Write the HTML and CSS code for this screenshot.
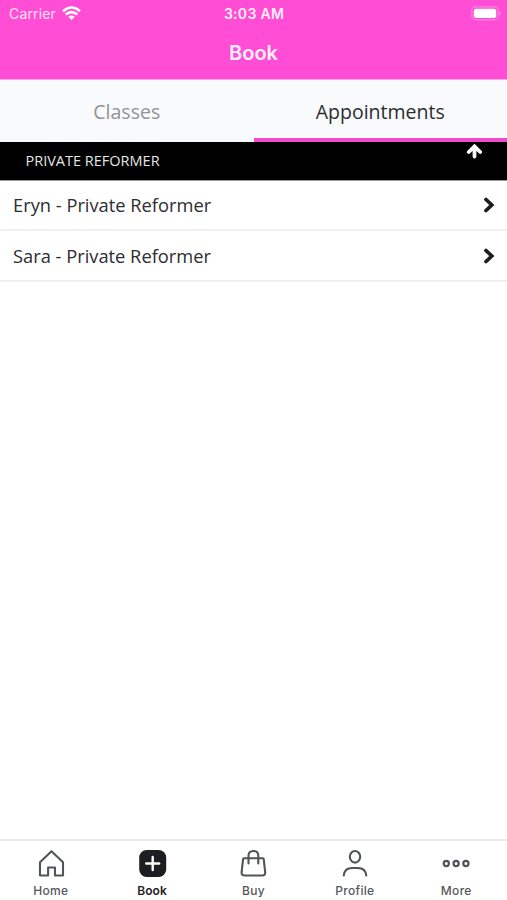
FILE: index.html
```html
<!DOCTYPE html>
<html lang="en">
<head>
<meta charset="utf-8">
<title>Book</title>
<link rel="stylesheet" href="styles.css">
</head>
<body>
<header class="header">
  <div class="status">
    <div class="carrier"><span>Carrier</span>
      <svg class="wifi" width="19" height="14" viewBox="0 0 19 14" fill="none" stroke="#fff" stroke-width="2.6"><path d="M1 5.200Q9.500-2.200 18 5.200M3.800 8.500Q9.500 3.600 15.200 8.500"/><path d="M6.300 10.700Q9.500 8.100 12.700 10.700L9.500 13.900Z" fill="#fff" stroke="none"/></svg>
    </div>
    <div class="time">3:03 AM</div>
    <svg class="battery" width="31" height="15" viewBox="0 0 31 15"><rect x=".8" y=".8" width="26.400" height="13" rx="3.800" fill="none" stroke="#ff83e1" stroke-width="1.200"/><rect x="2.800" y="2.800" width="22.400" height="9.200" rx="2.200" fill="#fff"/><path d="M28.500 5Q31 7.200 28.500 9.500Z" fill="#ff94e5"/></svg>
  </div>
  <h1 class="title">Book</h1>
</header>
<nav class="tabs">
  <div class="tab"><span>Classes</span></div>
  <div class="tab selected"><span>Appointments</span></div>
</nav>
<main class="content">
  <div class="section">
    <span>PRIVATE REFORMER</span>
    <svg class="up" width="16" height="16" viewBox="0 0 16 16" fill="none" stroke="#fff" stroke-width="3.800" stroke-linecap="round"><path d="M8.500 13.500V4M2.800 9L8.500 3.500L14.200 9"/></svg>
  </div>
  <div class="row first"><span>Eryn - Private Reformer</span>
    <svg width="12" height="16" viewBox="0 0 12 16" fill="none" stroke="#1c1c1e" stroke-width="3.700" stroke-linecap="round"><path d="M3 2.500L8.800 8L3 13.500"/></svg></div>
  <div class="row second"><span>Sara - Private Reformer</span>
    <svg width="12" height="16" viewBox="0 0 12 16" fill="none" stroke="#1c1c1e" stroke-width="3.700" stroke-linecap="round"><path d="M3 2.500L8.800 8L3 13.500"/></svg></div>
</main>
<footer class="bottom">
  <div class="item">
    <svg width="30" height="30" viewBox="0 0 30 30" fill="none" stroke="#505458" stroke-width="2.100"><path d="M4 13.200L15.500 2.300L27 13.200V26.500H19V18.500H12.100V26.500H4Z" stroke-linejoin="round"/></svg>
    <span>Home</span></div>
  <div class="item active">
    <svg width="30" height="30" viewBox="0 0 30 30"><rect x="2.200" y="1" width="27" height="27" rx="7.500" fill="#1c1e21"/><path d="M15.700 8V21M9.200 14.500H22.200" stroke="#fff" stroke-width="2.400" stroke-linecap="round"/></svg>
    <span>Book</span></div>
  <div class="item">
    <svg width="30" height="30" viewBox="0 0 30 30" fill="none" stroke="#505458" stroke-width="2.100" stroke-linecap="round"><path d="M5.900 9.300H24.900Q25.600 9.300 25.700 10L27.200 23.300Q27.400 26.500 24.200 26.500H6.600Q3.400 26.500 3.600 23.300L5.100 10Q5.200 9.300 5.900 9.300Z"/><path d="M10.500 14.500V6.800Q10.500 2 15.400 2T20.300 6.800V14.500"/></svg>
    <span>Buy</span></div>
  <div class="item">
    <svg width="30" height="30" viewBox="0 0 30 30" fill="none" stroke="#505458" stroke-width="2.100" stroke-linecap="round"><ellipse cx="15" cy="7.800" rx="5.200" ry="5.800"/><path d="M3.800 26.500Q4.500 19 12 19H18Q25.500 19 26.200 26.500"/></svg>
    <span>Profile</span></div>
  <div class="item">
    <svg width="30" height="30" viewBox="0 0 30 30" fill="none" stroke="#505458" stroke-width="2.200"><circle cx="5.300" cy="14.500" r="2.600"/><circle cx="15.100" cy="14.500" r="2.600"/><circle cx="24.900" cy="14.500" r="2.600"/></svg>
    <span>More</span></div>
</footer>
</body>
</html>
```
FILE: styles.css
```css
* { box-sizing: border-box; }
body {
  margin: 0;
  height: 900px;
  overflow: hidden;
  display: flex;
  flex-direction: column;
  background: #fff;
  color: #2c2d2f;
  font-family: "Open Sans", sans-serif;
}
svg { display: block; flex: none; }
.header {
  flex: none;
  height: 80px;
  background: #ff4dd5;
  border-bottom: 1px solid #ffa6ea;
  color: #fff;
  font-family: Inter, sans-serif;
}
.status {
  display: grid;
  grid-template-columns: 1fr auto 1fr;
  align-items: center;
  height: 27px;
  padding: 0 5px 0 9px;
  font-size: 14px;
}
.carrier { display: flex; align-items: center; gap: 6px; color: #ffe3f8; letter-spacing: .15px; }
.wifi { margin-top: -2px; }
.time { font-weight: 600; color: #fff0fb; letter-spacing: .3px; margin-left: -3px; }
.battery { justify-self: end; }
.title {
  margin: 0;
  height: 52px;
  line-height: 52px;
  text-align: center;
  font-size: 20px;
  font-weight: 600;
  color: #fff0fb;
}
.tabs {
  flex: none;
  display: grid;
  grid-template-columns: 1fr 1fr;
  height: 62px;
  background: #f8fafc;
  font-size: 19.5px;
}
.tab { display: flex; align-items: center; justify-content: center; padding-top: 1px; }
.tab:not(.selected) { color: #929397; }
.selected { border-bottom: 4px solid #f04acb; padding-top: 5px; }
.content { flex: 1; }
.section {
  display: flex;
  justify-content: space-between;
  height: 39px;
  padding: 0 25px 0 25.5px;
  background: #000;
  border-bottom: 1px solid #999;
  color: #e5e5e5;
  font-size: 14.5px;
  line-height: 38px;
}
.up { margin-top: 1px; }
.row {
  display: flex;
  align-items: center;
  justify-content: space-between;
  height: 50px;
  padding: 0 12px 0 13px;
  border-bottom: 2px solid #efefef;
  font-size: 18.3px;
}
.first span { padding-bottom: 2px; }
.second { height: 51px; }
.bottom {
  flex: none;
  display: grid;
  grid-template-columns: repeat(5, 1fr);
  height: 61px;
  padding-top: 8px;
  border-top: 2px solid #e9eaeb;
}
.item {
  display: flex;
  flex-direction: column;
  align-items: center;
  color: #55585b;
  font-family: Inter, sans-serif;
  font-size: 12px;
  font-weight: 500;
  line-height: 16px;
  letter-spacing: .3px;
}
.item span { margin-top: 4px; }
.active { color: #1c1e21; font-weight: 600; letter-spacing: .1px; }
```
